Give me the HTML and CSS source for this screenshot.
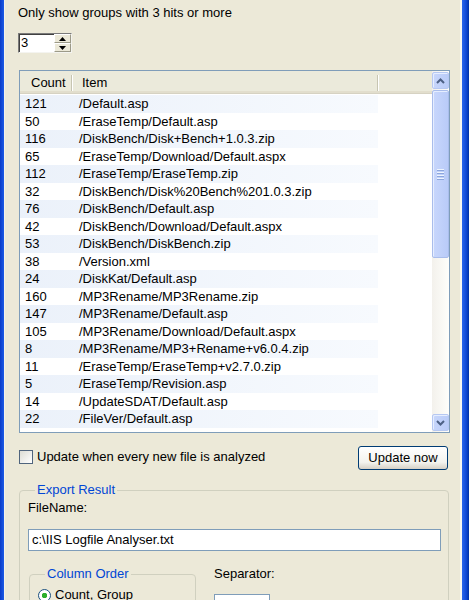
FILE: index.html
```html
<!DOCTYPE html>
<html>
<head>
<meta charset="utf-8">
<link rel="stylesheet" href="styles.css">
</head>
<body>
<div class="window">
  <div class="frame-left"></div>
  <div class="content">
    <div class="caption">Only show groups with 3 hits or more</div>
    <div class="spinner">
      <div class="spin-value">3</div>
      <div class="spin-buttons">
        <div class="spin-btn"><svg width="7" height="4" viewBox="0 0 7 4"><path d="M3.5 0 L7 4 L0 4 Z" fill="#000"/></svg></div>
        <div class="spin-btn"><svg width="7" height="4" viewBox="0 0 7 4"><path d="M0 0 L7 0 L3.5 4 Z" fill="#000"/></svg></div>
      </div>
    </div>

    <div class="listview">
      <div class="lv-main">
        <div class="lv-header">
          <div class="h-cell h-count">Count</div>
          <div class="h-cell h-item">Item</div>
          <div class="h-cell h-fill"></div>
        </div>
        <div class="lv-rows">
          <div class="row alt"><span class="c-count">121</span><span class="c-item">/Default.asp</span></div>
          <div class="row"><span class="c-count">50</span><span class="c-item">/EraseTemp/Default.asp</span></div>
          <div class="row alt"><span class="c-count">116</span><span class="c-item">/DiskBench/Disk+Bench+1.0.3.zip</span></div>
          <div class="row"><span class="c-count">65</span><span class="c-item">/EraseTemp/Download/Default.aspx</span></div>
          <div class="row alt"><span class="c-count">112</span><span class="c-item">/EraseTemp/EraseTemp.zip</span></div>
          <div class="row"><span class="c-count">32</span><span class="c-item">/DiskBench/Disk%20Bench%201.0.3.zip</span></div>
          <div class="row alt"><span class="c-count">76</span><span class="c-item">/DiskBench/Default.asp</span></div>
          <div class="row"><span class="c-count">42</span><span class="c-item">/DiskBench/Download/Default.aspx</span></div>
          <div class="row alt"><span class="c-count">53</span><span class="c-item">/DiskBench/DiskBench.zip</span></div>
          <div class="row"><span class="c-count">38</span><span class="c-item">/Version.xml</span></div>
          <div class="row alt"><span class="c-count">24</span><span class="c-item">/DiskKat/Default.asp</span></div>
          <div class="row"><span class="c-count">160</span><span class="c-item">/MP3Rename/MP3Rename.zip</span></div>
          <div class="row alt"><span class="c-count">147</span><span class="c-item">/MP3Rename/Default.asp</span></div>
          <div class="row"><span class="c-count">105</span><span class="c-item">/MP3Rename/Download/Default.aspx</span></div>
          <div class="row alt"><span class="c-count">8</span><span class="c-item">/MP3Rename/MP3+Rename+v6.0.4.zip</span></div>
          <div class="row"><span class="c-count">11</span><span class="c-item">/EraseTemp/EraseTemp+v2.7.0.zip</span></div>
          <div class="row alt"><span class="c-count">5</span><span class="c-item">/EraseTemp/Revision.asp</span></div>
          <div class="row"><span class="c-count">14</span><span class="c-item">/UpdateSDAT/Default.asp</span></div>
          <div class="row alt"><span class="c-count">22</span><span class="c-item">/FileVer/Default.asp</span></div>
          <div class="row"><span class="c-count">4</span><span class="c-item">/FileVer/Download/Default.aspx</span></div>
        </div>
      </div>
      <div class="scrollbar">
        <div class="sb-btn"><svg width="9" height="6" viewBox="0 0 9 6"><polyline points="1,5 4.5,1.5 8,5" fill="none" stroke="#4D6185" stroke-width="2"/></svg></div>
        <div class="sb-thumb"><div class="grip"></div><div class="grip"></div><div class="grip"></div><div class="grip"></div></div>
        <div class="sb-track"></div>
        <div class="sb-btn"><svg width="9" height="6" viewBox="0 0 9 6"><polyline points="1,1 4.5,4.5 8,1" fill="none" stroke="#4D6185" stroke-width="2"/></svg></div>
      </div>
    </div>

    <div class="action-row">
      <label class="check"><span class="checkbox"></span><span>Update when every new file is analyzed</span></label>
      <div class="button">Update now</div>
    </div>

    <fieldset class="group export">
      <legend>Export Result</legend>
      <div class="field-label">FileName:</div>
      <div class="textbox">c:\IIS Logfile Analyser.txt</div>
      <div class="export-row">
        <fieldset class="group order">
          <legend>Column Order</legend>
          <label class="radio"><span class="radio-dot"></span><span>Count, Group</span></label>
        </fieldset>
        <div class="sep">
          <div class="field-label">Separator:</div>
          <div class="textbox small"></div>
        </div>
      </div>
    </fieldset>
  </div>
  <div class="frame-right"></div>
</div>
</body>
</html>
```

FILE: styles.css
```css
html, body {
  margin: 0;
  padding: 0;
}
body {
  width: 469px;
  height: 600px;
  overflow: hidden;
  background: #ECE9D8;
  font-family: "Liberation Sans", Arial, sans-serif;
  font-size: 13px;
  color: #000;
}
.window {
  display: flex;
  height: 600px;
}
.frame-left {
  width: 4px;
  flex: none;
  background: linear-gradient(to right, #0A3BC8, #1C5BE6);
  border-right: 1px solid #F3F2EA;
}
.frame-right {
  width: 7px;
  flex: none;
  background: linear-gradient(to right, #2A66EC, #0F48D6 60%, #0031A4);
  border-left: 2px solid #F7F6F0;
}
.content {
  flex: 1;
  padding-left: 13px;
  overflow: hidden;
}
.caption {
  margin-top: 5px;
  line-height: 16px;
}
.spinner {
  margin-top: 12px;
  width: 54px;
  height: 20px;
  box-sizing: border-box;
  display: flex;
  background: #fff;
  border: 1px solid;
  border-color: #7A7A7A #F4F4F0 #F4F4F0 #7A7A7A;
  box-shadow: inset 1px 1px 0 #404040;
}
.spin-value {
  flex: 1;
  padding-left: 2px;
  line-height: 18px;
}
.spin-buttons {
  width: 17px;
  display: flex;
  flex-direction: column;
}
.spin-btn {
  flex: 1;
  display: flex;
  align-items: center;
  justify-content: center;
  background: #ECE9D8;
  border: 1px solid;
  border-color: #FFFFFF #9C9A88 #9C9A88 #FFFFFF;
}
.listview {
  margin-top: 17px;
  margin-left: 1px;
  width: 431px;
  height: 363px;
  box-sizing: border-box;
  border: 1px solid #7F9DB9;
  background: #fff;
  display: flex;
}
.lv-main {
  flex: 1;
  overflow: hidden;
}
.lv-header {
  display: flex;
  height: 20px;
  padding-top: 2px;
  background: #EBEADB;
  border-bottom: 1px solid #D6D2C2;
  box-shadow: inset 0 -2px 0 #E2DECD;
}
.h-cell {
  line-height: 20px;
  box-sizing: border-box;
  position: relative;
}
.h-cell::after {
  content: "";
  position: absolute;
  right: 0;
  top: 2px;
  bottom: 2px;
  width: 1px;
  background: #C7C5B2;
  box-shadow: 1px 0 0 #FFFFFF;
}
.h-fill::after {
  display: none;
}
.h-count {
  width: 52px;
  padding-left: 11px;
}
.h-item {
  width: 306px;
  padding-left: 10px;
}
.h-fill {
  flex: 1;
}
.lv-rows {
  padding-top: 1px;
}
.row {
  display: flex;
  width: 358px;
  height: 17.5px;
  line-height: 17px;
  white-space: nowrap;
}
.row.alt {
  background: linear-gradient(to right, #EBF1FA, #F7FAFE);
}
.c-count {
  width: 52px;
  padding-left: 5px;
  box-sizing: border-box;
  flex: none;
}
.c-item {
  padding-left: 7px;
}
.scrollbar {
  width: 17px;
  flex: none;
  display: flex;
  flex-direction: column;
  background: linear-gradient(to right, #F3F1EC, #FEFEFB);
}
.sb-btn {
  height: 17px;
  box-sizing: border-box;
  margin: 1px 0 0 0;
  border: 1px solid #B6C8F2;
  border-radius: 2px;
  background: linear-gradient(to right, #C7D6FB, #BACCF8);
  box-shadow: inset 1px 1px 0 #E6EEFF;
  display: flex;
  align-items: center;
  justify-content: center;
}
.sb-btn:last-child {
  margin: 0 0 1px 0;
}
.sb-thumb {
  height: 168px;
  box-sizing: border-box;
  margin-top: 1px;
  border: 1px solid #A9BDEB;
  border-radius: 2px;
  background: linear-gradient(to right, #C8D7FC, #B9CBF8);
  box-shadow: inset 1px 1px 0 #E6EEFF;
  display: flex;
  flex-direction: column;
  align-items: center;
  justify-content: center;
  gap: 1px;
}
.grip {
  width: 7px;
  height: 1px;
  background: #EEF4FE;
  box-shadow: 0 1px 0 #8CA6DD;
  margin-bottom: 1px;
}
.sb-track {
  flex: 1;
}
.action-row {
  margin-top: 13px;
  margin-left: 1px;
  width: 430px;
  display: flex;
  justify-content: space-between;
  align-items: flex-start;
}
.check {
  display: flex;
  align-items: center;
  gap: 4px;
  margin-top: 3px;
  line-height: 16px;
}
.checkbox {
  width: 14px;
  height: 14px;
  box-sizing: border-box;
  border: 1px solid #4F647D;
  background: linear-gradient(135deg, #DCDCD4, #FFFFFF);
}
.button {
  width: 90px;
  height: 24px;
  box-sizing: border-box;
  border: 1px solid #003C74;
  border-radius: 3px;
  background: linear-gradient(#FFFFFF, #F3F3EE 70%, #D6D0C5);
  text-align: center;
  line-height: 22px;
  margin-right: 1px;
}
.group {
  margin: 0;
  padding: 0;
  border: 1px solid #D0D0BF;
  border-radius: 4px;
  min-width: 0;
}
.group legend {
  color: #0046D5;
  padding: 0 2px;
  margin-left: 7px;
  line-height: 16px;
}
.export {
  margin-top: 12px;
  margin-left: 1px;
  width: 430px;
  box-sizing: border-box;
  padding: 2px 8px 10px 8px;
  height: 140px;
}
.field-label {
  line-height: 16px;
}
.textbox {
  margin-top: 13px;
  width: 413px;
  height: 22px;
  box-sizing: border-box;
  border: 1px solid #7F9DB9;
  background: #fff;
  padding-left: 3px;
  line-height: 20px;
}
.export-row {
  margin-top: 15px;
  display: flex;
  gap: 18px;
}
.order {
  width: 167px;
  margin-left: 1px;
  height: 60px;
  box-sizing: border-box;
  padding: 5px 8px;
}
.radio {
  display: flex;
  align-items: center;
  gap: 4px;
  line-height: 16px;
}
.radio-dot {
  width: 13px;
  height: 13px;
  box-sizing: border-box;
  border: 1px solid #1C5180;
  border-radius: 50%;
  background: radial-gradient(circle, #2BAE2B 0 2.5px, #fff 3px);
}
.textbox.small {
  width: 56px;
  margin-top: 12px;
}
```
